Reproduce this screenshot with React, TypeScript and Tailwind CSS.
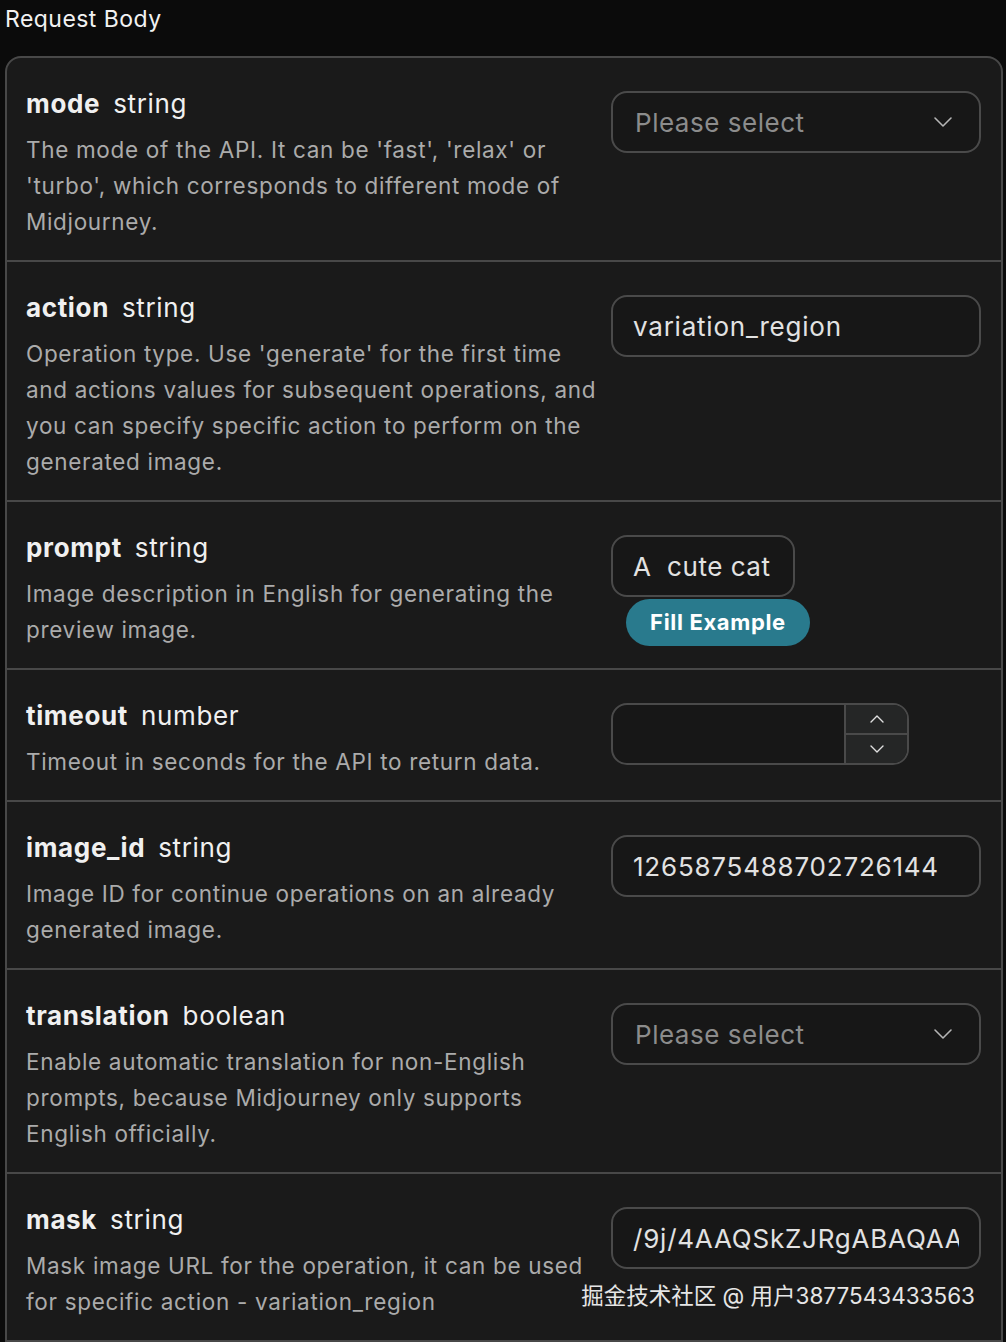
import React from 'react';
import { ChevronDown, ChevronUp } from 'lucide-react';

type Field = {
  name: string;
  type: string;
  desc: string;
  kind: 'select' | 'text' | 'prompt' | 'number';
  value?: string;
};

const fields: Field[] = [
  {
    name: 'mode',
    type: 'string',
    desc: "The mode of the API. It can be 'fast', 'relax' or 'turbo', which corresponds to different mode of Midjourney.",
    kind: 'select',
  },
  {
    name: 'action',
    type: 'string',
    desc: "Operation type. Use 'generate' for the first time and actions values for subsequent operations, and you can specify specific action to perform on the generated image.",
    kind: 'text',
    value: 'variation_region',
  },
  {
    name: 'prompt',
    type: 'string',
    desc: 'Image description in English for generating the preview image.',
    kind: 'prompt',
    value: 'A  cute cat',
  },
  {
    name: 'timeout',
    type: 'number',
    desc: 'Timeout in seconds for the API to return data.',
    kind: 'number',
  },
  {
    name: 'image_id',
    type: 'string',
    desc: 'Image ID for continue operations on an already generated image.',
    kind: 'text',
    value: '1265875488702726144',
  },
  {
    name: 'translation',
    type: 'boolean',
    desc: 'Enable automatic translation for non-English prompts, because Midjourney only supports English officially.',
    kind: 'select',
  },
  {
    name: 'mask',
    type: 'string',
    desc: 'Mask image URL for the operation, it can be used for specific action - variation_region',
    kind: 'text',
    value: '/9j/4AAQSkZJRgABAQAA',
  },
];

function Control({ f }: { f: Field }) {
  if (f.kind === 'select') {
    return (
      <div className="h-[62px] w-[370px] rounded-[16px] border-2 border-[#4a4a4a] bg-[#171717] flex items-center justify-between pl-[22px] pr-[20px]">
        <span className="text-[26px] tracking-[0.02em] text-[#8c8c8c]">Please select</span>
        <ChevronDown size={32} strokeWidth={1.2} className="text-[#b5b5b5]" />
      </div>
    );
  }
  if (f.kind === 'prompt') {
    return (
      <div className="flex flex-col items-start">
        <div className="h-[62px] w-[184px] rounded-[16px] border-2 border-[#4a4a4a] bg-[#171717] flex items-center pl-[20px] text-[26px] tracking-[0.02em] text-[#e2e2e2] whitespace-pre">
          {f.value}
        </div>
        <button className="ml-[15px] mt-[2px] h-[47px] w-[184px] rounded-full bg-[#297a8d] text-white font-bold text-[22px] tracking-[0.03em]">
          Fill Example
        </button>
      </div>
    );
  }
  if (f.kind === 'number') {
    return (
      <div className="h-[62px] w-[298px] rounded-[16px] border-2 border-[#4a4a4a] bg-[#171717] flex overflow-hidden">
        <div className="flex-1" />
        <div className="w-[63px] border-l-2 border-[#4a4a4a] bg-[#252626] flex flex-col">
          <div className="flex-1 flex items-center justify-center border-b-2 border-[#4a4a4a]">
            <ChevronUp size={24} strokeWidth={1.4} className="text-[#e0e0e0]" />
          </div>
          <div className="flex-1 flex items-center justify-center">
            <ChevronDown size={24} strokeWidth={1.4} className="text-[#e0e0e0]" />
          </div>
        </div>
      </div>
    );
  }
  return (
    <div className="h-[62px] w-[370px] rounded-[16px] border-2 border-[#4a4a4a] bg-[#171717] flex items-center pl-[20px] pr-[20px] overflow-hidden">
      <span className="text-[26px] tracking-[0.03em] text-[#e2e2e2] whitespace-nowrap overflow-hidden">
        {f.value}
      </span>
    </div>
  );
}

export default function App() {
  return (
    <div
      className="min-h-[1342px] bg-[#0b0b0b] text-white"
      style={{ fontFamily: 'Inter, "Noto Sans CJK SC", sans-serif' }}
    >
      <div className="h-[56px] pl-[5px] pt-[4px] text-[23px] tracking-[0.02em] leading-[30px] text-[#f2f2f2]">
        Request Body
      </div>

      <div className="relative ml-[5px] mr-[3px] rounded-t-[16px] border-2 border-[#484848] bg-[#1a1a1a]">
        {fields.map((f, i) => (
          <div
            key={f.name}
            className={`flex gap-[10px] pl-[19px] pr-[20px] pt-[28px] pb-[20px] ${
              i > 0 ? 'border-t-2 border-[#484848]' : ''
            }`}
          >
            <div className="w-[575px]">
              <div className="flex items-baseline gap-[13px] text-[26px] tracking-[0.025em] leading-[36px] text-[#f0f0f0]">
                <span className="font-bold">{f.name}</span>
                <span>{f.type}</span>
              </div>
              <p className="mt-[10px] text-[22.5px] tracking-[0.03em] leading-[36px] text-[#ababab]">
                {f.desc}
              </p>
            </div>
            <div className="pt-[5px]">
              <Control f={f} />
            </div>
          </div>
        ))}

        <div className="absolute right-[26px] bottom-[29px] text-[22.5px] leading-[30px] text-[#e6e6e6]">
          掘金技术社区 @ 用户3877543433563
        </div>
      </div>
    </div>
  );
}
